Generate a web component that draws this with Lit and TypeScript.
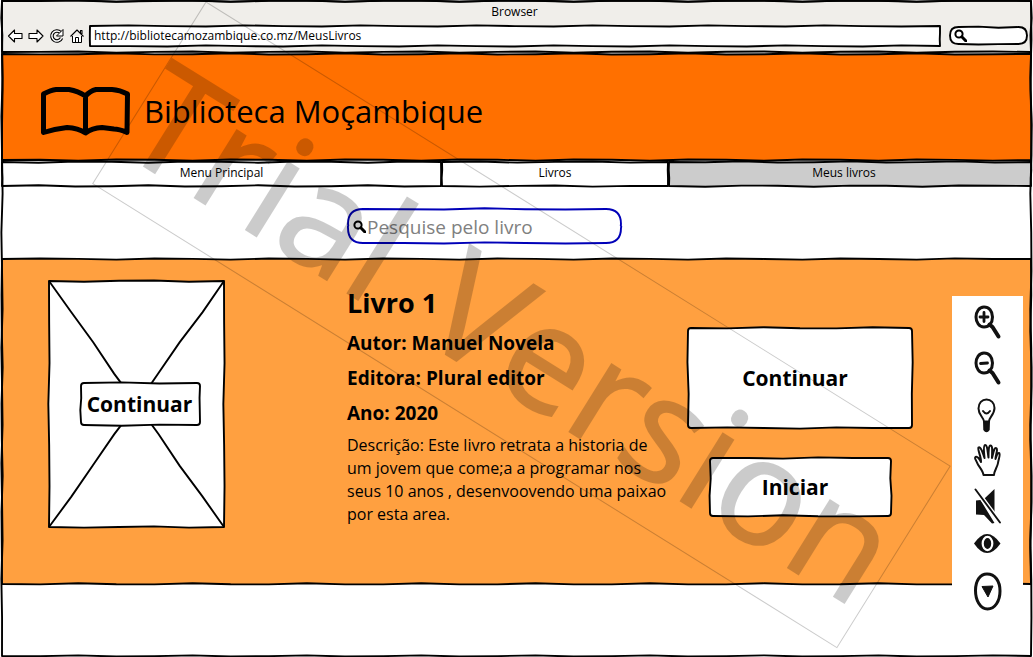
import { LitElement, html, css, svg } from "lit";
import { customElement, property, state } from "lit/decorators.js";

type Point = [number, number];

/** A box outlined with a slightly unsteady, hand-drawn line. */
@customElement("sketch-box")
class SketchBox extends LitElement {
  @property({ type: Number }) seed = 1;
  @property({ type: Number }) radius = 0;
  @property({ type: Boolean }) crossed = false;
  @state() private w = 0;
  @state() private h = 0;
  private observer?: ResizeObserver;

  static styles = css`
    :host {
      position: relative;
      display: block;
      --fill: #fff;
      --line: #000;
    }
    .frame {
      position: absolute;
      inset: 0;
      width: 100%;
      height: 100%;
      overflow: visible;
      pointer-events: none;
    }
    .outline {
      fill: var(--fill);
      stroke: var(--line);
      stroke-width: 1.9;
      stroke-linejoin: round;
    }
    .stroke {
      fill: none;
      stroke: var(--line);
      stroke-width: 1.9;
    }
  `;

  connectedCallback() {
    super.connectedCallback();
    this.observer = new ResizeObserver(() => this.measure());
    this.observer.observe(this);
  }

  disconnectedCallback() {
    super.disconnectedCallback();
    this.observer?.disconnect();
  }

  firstUpdated() {
    this.measure();
  }

  private measure() {
    this.w = this.offsetWidth;
    this.h = this.offsetHeight;
  }

  private side(a: Point, b: Point, k: number) {
    const length = Math.hypot(b[0] - a[0], b[1] - a[1]);
    if (length < 1) return "";
    const steps = Math.max(3, Math.round(length / 38));
    const sway = length < 30 ? 0.3 : 0.7;
    const nx = -(b[1] - a[1]) / length;
    const ny = (b[0] - a[0]) / length;
    let d = "";
    for (let i = 1; i <= steps; i++) {
      const t = i / steps;
      const off = i === steps ? 0 : Math.sin(i * 2.1 + this.seed * 3.7 + k * 1.9) * sway;
      d += `L${(a[0] + (b[0] - a[0]) * t + nx * off).toFixed(2)} ${(a[1] + (b[1] - a[1]) * t + ny * off).toFixed(2)}`;
    }
    return d;
  }

  private outline() {
    const r = Math.min(this.radius, this.h / 2 - 1);
    const x1 = this.w - 1;
    const y1 = this.h - 1;
    return (
      `M${1 + r} 1` + this.side([1 + r, 1], [x1 - r, 1], 0) +
      `Q${x1} 1 ${x1} ${1 + r}` + this.side([x1, 1 + r], [x1, y1 - r], 1) +
      `Q${x1} ${y1} ${x1 - r} ${y1}` + this.side([x1 - r, y1], [1 + r, y1], 2) +
      `Q1 ${y1} 1 ${y1 - r}` + this.side([1, y1 - r], [1, 1 + r], 3) +
      `Q1 1 ${1 + r} 1Z`
    );
  }

  render() {
    const { w, h } = this;
    return html`
      <svg class="frame" aria-hidden="true">
        ${w && h ? svg`<path class="outline" d=${this.outline()} />` : null}
        ${w && h && this.crossed
          ? svg`<path class="stroke" d=${
              "M1 1" + this.side([1, 1], [w - 1, h - 1], 1) +
              `M${w - 1} 1` + this.side([w - 1, 1], [1, h - 1], 2)} />`
          : null}
      </svg>
      <slot></slot>
    `;
  }
}

const magnifier = svg`
  <circle cx="5" cy="5" r="3.6" fill="none" stroke="#000" stroke-width="2" />
  <path d="M7.8 7.8L12 12" stroke="#000" stroke-width="3" stroke-linecap="round" />`;

const tools = [
  {
    label: "Aumentar zoom", kind: "tool",
    art: svg`<path d="M10 2C5 2 2 7 2 12s3 10 8 10 8.500-4 8.500-10S15 2 10 2Z" fill="none" stroke="#111" stroke-width="3"/>
      <path d="M10 7.500v9M6 12h8" stroke="#111" stroke-width="2.800" stroke-linecap="round"/>
      <path d="M15.500 19.500L18.500 22 24.500 31.500" fill="none" stroke="#111" stroke-width="4" stroke-linecap="round" stroke-linejoin="round"/>`,
  },
  {
    label: "Diminuir zoom", kind: "tool",
    art: svg`<path d="M10 2C5 2 2 7 2 12s3 10 8 10 8.500-4 8.500-10S15 2 10 2Z" fill="none" stroke="#111" stroke-width="3"/>
      <path d="M6.500 12.500l7-.5" stroke="#111" stroke-width="2.800" stroke-linecap="round"/>
      <path d="M15.500 19.500L18.500 22 24.500 31.500" fill="none" stroke="#111" stroke-width="4" stroke-linecap="round" stroke-linejoin="round"/>`,
  },
  {
    label: "Contraste", kind: "tool",
    art: svg`<g transform="translate(-1 2)"><path d="M11 22.500C10.500 18 5.500 16 5.500 9.500 5.500 4 9 .5 13.500.5s8 3.500 8 8.500c0 6.500-5.500 9.500-5.500 13.500Z" fill="#fff" stroke="#111" stroke-width="2"/>
      <path d="M10 12q3.500 5 7 0" fill="none" stroke="#111" stroke-width="2" stroke-linecap="round"/>
      <path d="M10 22q3.500 1.500 7 0l-.3 9q-3.200 4.500-6.400 0Z" fill="#111"/></g>`,
  },
  {
    label: "Mover", kind: "tool",
    art: svg`<path d="M9.500 32C9 27 4 23 3 19.500 2 17 0 15 1.500 14c2-1 4 2 5.500 5C7.500 14 3 6 4.500 4.500 6.500 3 8.500 9 10.500 15 10 9 9 2.500 11 2c2.500-.5 2.500 7 3.500 12.500C14.500 9 14.500 2.500 16.500 2.500c2.500 0 1.500 7 1.500 12.500C19.500 10 20 4.500 22 5c2.500.5-.5 7-.5 11C22.500 13 23.500 9.500 25 10c2 1-.5 6-1 10-.5 4-4 8-4 12Z" fill="#fff" stroke="#111" stroke-width="2" stroke-linejoin="round"/>`,
  },
  {
    label: "Sem som", kind: "tool",
    art: svg`<path d="M2 11.500l4.500-.5 14 23-2.500.5-8-8.500-8-.5Z" fill="#111"/>
      <path d="M10.500 9.500L20.500 0v24.500Z" fill="#111"/>
      <path d="M1.500.5L26 33.500" stroke="#fff" stroke-width="4.600"/>
      <path d="M1.500.5L26 33.500" stroke="#111" stroke-width="1.900" stroke-linecap="round"/>`,
  },
  {
    label: "Visualizar", kind: "tool short",
    art: svg`<path d="M0 17.500Q13-1.500 26.500 17.500 13 36.500 0 17.500Z" fill="#111"/>
      <ellipse cx="13.500" cy="17.500" rx="4.800" ry="6.600" fill="none" stroke="#fff" stroke-width="2.200"/>
      <ellipse cx="13.500" cy="17.500" rx="2.200" ry="3.500" fill="#111"/>`,
  },
  {
    label: "Mais opções", kind: "tool last",
    art: svg`<path d="M13 0C6 0 1.500 7 1.500 16.500S6 35 13.500 35 26 27 26 17 21 0 13 0Z" fill="none" stroke="#111" stroke-width="3"/>
      <path d="M8 12.500l11-.5-5 11Z" fill="#111" stroke="#111" stroke-linejoin="round"/>`,
  },
];

@customElement("app-root")
class AppRoot extends LitElement {
  static styles = css`
    :host {
      position: relative;
      display: block;
      overflow: hidden;
      background: #fff;
      color: #000;
      font-family: "Open Sans", "Noto Sans", sans-serif;
      font-size: 12px;
    }
    * {
      box-sizing: border-box;
    }
    button,
    input {
      position: relative;
      margin: 0;
      padding: 0;
      border: 0;
      background: none;
      color: inherit;
      font: inherit;
      outline: none;
    }
    svg {
      flex: none;
      display: block;
    }
    .window {
      display: flex;
      flex-direction: column;
      min-height: 100vh;
      margin: 0 1px;
    }
    .chrome {
      --fill: #f0eeea;
      height: 53px;
      padding: 0 4px 0 6px;
    }
    .title {
      position: relative;
      height: 24px;
      line-height: 24px;
      text-align: center;
      margin: 0;
      padding-right: 6px;
      font-weight: 400;
    }
    .bar {
      position: relative;
      display: flex;
      align-items: center;
      height: 23px;
    }
    .nav {
      display: flex;
      gap: 4px;
      width: 82px;
    }
    .address {
      flex: 1;
      height: 22px;
      margin-right: 8px;
    }
    .address input {
      width: 100%;
      height: 22px;
      padding: 0 5px;
      line-height: 22px;
      display: block;
    }
    .find {
      width: 79px;
      height: 19px;
      padding-left: 5px;
    }
    .find-row {
      position: relative;
      display: flex;
      align-items: center;
      height: 19px;
    }
    .find-row input {
      width: 52px;
    }
    .brand {
      --fill: #ff7000;
      height: 108px;
    }
    .brand-row {
      position: relative;
      display: flex;
      align-items: center;
      gap: 14px;
      height: 108px;
      padding: 7px 39px 0;
    }
    h1 {
      margin: 0;
      font-size: 31px;
      line-height: 40px;
      font-weight: 400;
    }
    .tabs {
      display: grid;
      grid-template-columns: 441fr 227fr 363fr;
    }
    .tabs sketch-box {
      height: 26px;
      margin-left: -1px;
    }
    .tabs sketch-box:first-child {
      margin-left: 0;
    }
    .tabs .current {
      --fill: #ccc;
    }
    .tabs button {
      display: block;
      width: 100%;
      height: 24px;
      line-height: 24px;
    }
    .tabs .current button {
      padding-right: 12px;
    }
    .search {
      padding: 21px 0 14px 346px;
    }
    .search sketch-box {
      --line: #0000b8;
      width: 275px;
      height: 36px;
    }
    .search label {
      position: relative;
      display: flex;
      align-items: center;
      gap: 1px;
      height: 36px;
      padding-left: 6px;
    }
    .search input {
      flex: 1;
      min-width: 0;
      height: 36px;
      padding: 2px 16px 0 0;
      font-size: 19px;
    }
    .search input::placeholder {
      color: #808080;
      opacity: 1;
    }
    .shelf {
      --fill: #ffa040;
    }
    .book {
      position: relative;
      display: grid;
      grid-template-columns: 177px 328px 226px;
      column-gap: 122px;
      align-items: start;
      min-height: 327px;
      padding: 22px 0 0 47px;
    }
    .cover {
      display: block;
      height: 248px;
      --fill: #fff;
    }
    .cover-inner {
      position: relative;
      display: grid;
      place-items: center;
      height: 248px;
      padding-left: 8px;
    }
    .action {
      --fill: #fff;
      font-size: 21px;
      font-weight: 700;
    }
    .action button {
      display: block;
      width: 100%;
      height: 100%;
    }
    .small {
      width: 121px;
      height: 44px;
    }
    .small button {
      padding-right: 2px;
    }
    .actions button {
      padding-right: 10px;
    }
    h2,
    .fact,
    .about {
      margin: 0;
    }
    h2 {
      padding: 2px 0;
      font-size: 27px;
      line-height: 42px;
    }
    .fact {
      font-size: 19px;
      font-weight: 700;
      line-height: 35px;
    }
    .about {
      margin-top: 3px;
      font-size: 16px;
      line-height: 23px;
    }
    .actions {
      display: grid;
      justify-items: center;
      gap: 28px;
      margin-left: -110px;
      padding-top: 47px;
      width: 226px;
    }
    .large {
      width: 226px;
      height: 102px;
    }
    .medium {
      width: 183px;
      height: 60px;
    }
    .footer {
      flex: 1;
      min-height: 60px;
    }
    .edge {
      position: absolute;
      inset: 0 1px;
      --fill: none;
      pointer-events: none;
    }
    .palette {
      position: absolute;
      top: 296px;
      right: 10px;
      display: flex;
      flex-direction: column;
      align-items: center;
      width: 71px;
      padding: 3px 0 14px;
      background: #fff;
    }
    .tool {
      display: grid;
      grid-template-rows: 100%;
      place-items: center;
      width: 46px;
      height: 46px;
    }
    .short {
      height: 28px;
    }
    .last {
      height: 46px;
      margin-top: 11px;
    }
    .watermark {
      position: absolute;
      top: 0;
      left: 0;
      opacity: 0.2;
      pointer-events: none;
    }
    .watermark text {
      font-size: 148px;
      stroke: #000;
      stroke-width: 2;
    }
  `;

  render() {
    return html`
      <div class="window">
        <sketch-box class="chrome" seed="2">
          <p class="title">Browser</p>
          <div class="bar">
            <nav class="nav" aria-label="Navegação">
              <button aria-label="Voltar"><svg width="17" height="16" viewBox="0 0 17 16"><path d="M1.500 8L7.500 2v3.500h7.500v5H7.500V14Z" fill="#fff" stroke="#000" stroke-width="1.100" stroke-linejoin="round" /></svg></button>
              <button aria-label="Avançar"><svg width="17" height="16" viewBox="0 0 17 16"><path d="M15 8L9 2v3.500H1v5h8V14Z" fill="#fff" stroke="#000" stroke-width="1.100" stroke-linejoin="round" /></svg></button>
              <button aria-label="Recarregar"><svg width="16" height="16" viewBox="0 0 16 16"><path d="M11.500 4.500A5 5 0 1 0 12.500 10" fill="none" stroke="#000" stroke-width="3.600" /><path d="M11.500 4.500A5 5 0 1 0 12.500 10" fill="none" stroke="#fff" stroke-width="1.400" /><path d="M14 1.500V8H7.500l2.500-2.500Z" fill="#fff" stroke="#000" stroke-linejoin="round" /></svg></button>
              <button aria-label="Início"><svg width="16" height="16" viewBox="0 0 16 16"><path d="M3.500 8v6.500h9V8" fill="#fff" stroke="#000" /><path d="M1.500 8.500L8 2l6.500 6.500M11.500 5V2.500h1.500V6" fill="none" stroke="#000" stroke-width="1.100" stroke-linejoin="round" /><path d="M6.500 14.500V9.500h3v5" fill="none" stroke="#000" /></svg></button>
            </nav>
            <sketch-box class="address" seed="4">
              <input aria-label="Endereço" value="http://bibliotecamozambique.co.mz/MeusLivros" />
            </sketch-box>
            <sketch-box class="find" seed="1" radius="10">
              <div class="find-row">
                <svg width="13" height="13" viewBox="0 0 13 13">${magnifier}</svg>
                <input type="text" aria-label="Pesquisar na web" />
              </div>
            </sketch-box>
          </div>
        </sketch-box>

        <sketch-box class="brand" seed="3">
          <header class="brand-row">
            <svg width="90" height="50" viewBox="0 0 90 50" aria-hidden="true">
              <path d="M3.500 46.500V8Q11 4 16 3.500L29 3.500Q38 5 45.500 10Q50 5 56 3.500L72 3.500Q80 4 87.500 8L87 46.500Q79 43 74 43L62 41.500Q52 42 45.500 47Q38 42 27 41.500Q14 43 3.500 46.500ZM45.500 10V47" fill="none" stroke="#000" stroke-width="5" stroke-linejoin="round" />
            </svg>
            <h1>Biblioteca Moçambique</h1>
          </header>
        </sketch-box>

        <nav class="tabs" aria-label="Secções">
          <sketch-box seed="5"><button>Menu Principal</button></sketch-box>
          <sketch-box seed="6"><button>Livros</button></sketch-box>
          <sketch-box class="current" seed="7"><button aria-current="page">Meus livros</button></sketch-box>
        </nav>

        <div class="search">
          <sketch-box seed="8" radius="15">
            <label>
              <svg width="13" height="13" viewBox="0 0 13 13" aria-hidden="true">${magnifier}</svg>
              <input type="search" aria-label="Pesquise pelo livro" placeholder="Pesquise pelo livro" />
            </label>
          </sketch-box>
        </div>

        <sketch-box class="shelf" seed="9">
          <article class="book">
            <sketch-box class="cover" seed="10" crossed>
              <div class="cover-inner">
                <sketch-box class="action small" seed="11" radius="3"><button>Continuar</button></sketch-box>
              </div>
            </sketch-box>
            <div>
              <h2>Livro 1</h2>
              <p class="fact">Autor: Manuel Novela</p>
              <p class="fact">Editora: Plural editor</p>
              <p class="fact">Ano: 2020</p>
              <p class="about">Descrição: Este livro retrata a historia de um jovem que come;a a programar nos seus 10 anos , desenvoovendo uma paixao por esta area.</p>
            </div>
            <div class="actions">
              <sketch-box class="action large" seed="12" radius="3"><button>Continuar</button></sketch-box>
              <sketch-box class="action medium" seed="13" radius="3"><button>Iniciar</button></sketch-box>
            </div>
          </article>
        </sketch-box>
        <div class="footer"></div>
      </div>

      <sketch-box class="edge" seed="14"></sketch-box>

      <aside class="palette" aria-label="Acessibilidade">
        ${tools.map(
          (t) => html`<button class=${t.kind} aria-label=${t.label}>
            <svg width="27" height="35" viewBox="0 0 27 35" overflow="visible">${t.art}</svg>
          </button>`
        )}
      </aside>

      <svg class="watermark" width="1033" height="657" viewBox="0 0 1033 657">
        <g transform="translate(206 2) rotate(31.95)">
          <rect width="877" height="214" fill="none" stroke="#000" />
          <text x="0" y="172">Trial</text>
          <text x="352" y="172">Version</text>
        </g>
      </svg>
    `;
  }
}
